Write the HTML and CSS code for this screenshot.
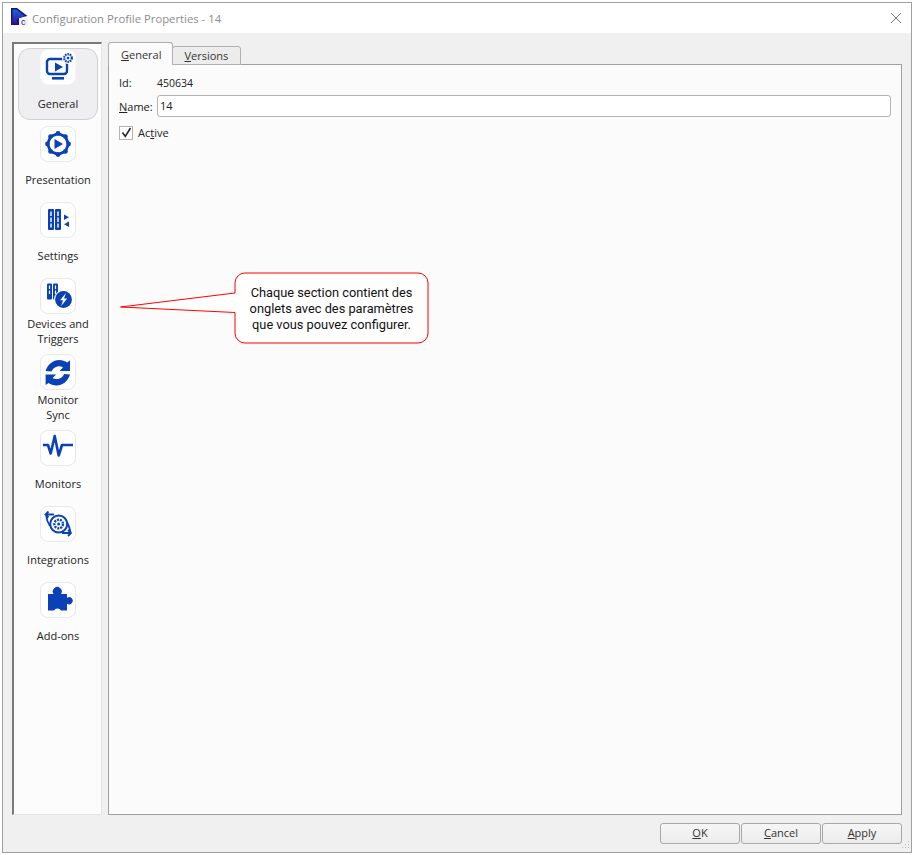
FILE: index.html
```html
<!DOCTYPE html>
<html lang="en">
<head>
    <meta charset="UTF-8">
    <title>Configuration Profile Properties - 14</title>
    <link rel="stylesheet" href="styles.css">
</head>
<body>
    <div class="window">
        <div class="titlebar">
            <svg class="app-icon" width="20" height="20" viewBox="0 0 20 20">
                <defs>
                    <linearGradient id="logo-fill" x1="0" y1="0" x2="0" y2="1">
                        <stop offset="0" stop-color="#1668e0"/>
                        <stop offset="1" stop-color="#3a0f9a"/>
                    </linearGradient>
                </defs>
                <path d="M0 0h6l10.500 8L8 10v7H0z" fill="#14147a"/>
                <path d="M1.500 1.500h4L13.500 8 6 11.500v4H1.500z" fill="url(#logo-fill)"/>
                <rect x="8" y="10" width="9" height="7.500" fill="#f2f0fa"/>
                <text x="10" y="16.500" class="app-c">c</text>
            </svg>
            <span class="title">Configuration Profile Properties - 14</span>
            <svg class="close" width="12" height="12" viewBox="0 0 12 12">
                <path d="M1 1l10 10M11 1L1 11" stroke="#777" stroke-width="1" fill="none"/>
            </svg>
        </div>
        <div class="client">
            <div class="main">
                <div class="sidebar">
                    <div class="nav-item selected">
                        <div class="nav-icon">
                            <svg width="30" height="30" viewBox="0 0 30 30">
                                <rect x="4" y="7" width="20" height="15" rx="3" fill="none" stroke="#0a41b5" stroke-width="2.400"/>
                                <path d="M12 10.500l8 4.500-8 4.500z" fill="#0a41b5"/>
                                <rect x="9" y="25" width="12" height="2.600" fill="#0a41b5"/>
                                <circle cx="25" cy="6" r="6" fill="#fff"/>
                                <circle cx="25" cy="6" r="3.800" fill="none" stroke="#0a41b5" stroke-width="2.200" stroke-dasharray="1.600 .8"/>
                                <circle cx="25" cy="6" r="1.300" fill="#0a41b5"/>
                            </svg>
                        </div>
                        <span>General</span>
                    </div>
                    <div class="nav-item">
                        <div class="nav-icon">
                            <svg width="30" height="30" viewBox="0 0 30 30">
                                <polygon points="15,4.500 22.400,7.600 25.500,15 22.400,22.400 15,25.500 7.600,22.400 4.500,15 7.600,7.600" fill="none" stroke="#0a41b5" stroke-width="2.800"/>
                                <g fill="#0a41b5">
                                    <circle cx="15" cy="4.500" r="2.400"/><circle cx="22.400" cy="7.600" r="2.400"/><circle cx="25.500" cy="15" r="2.400"/><circle cx="22.400" cy="22.400" r="2.400"/>
                                    <circle cx="15" cy="25.500" r="2.400"/><circle cx="7.600" cy="22.400" r="2.400"/><circle cx="4.500" cy="15" r="2.400"/><circle cx="7.600" cy="7.600" r="2.400"/>
                                    <path d="M11.500 10l8.500 5-8.500 5z"/>
                                </g>
                            </svg>
                        </div>
                        <span>Presentation</span>
                    </div>
                    <div class="nav-item">
                        <div class="nav-icon">
                            <svg width="30" height="30" viewBox="0 0 30 30">
                                <rect x="5" y="4" width="6" height="21" rx="1" fill="#0a41b5"/>
                                <rect x="12" y="4" width="6" height="21" rx="1" fill="#0a41b5"/>
                                <g fill="#fff">
                                    <rect x="7.300" y="6.500" width="1.400" height="4.500"/><rect x="7.300" y="12.500" width="1.400" height="4.500"/><rect x="7.300" y="18.500" width="1.400" height="4"/>
                                    <rect x="14.300" y="6.500" width="1.400" height="4.500"/><rect x="14.300" y="12.500" width="1.400" height="4.500"/><rect x="14.300" y="18.500" width="1.400" height="4"/>
                                </g>
                                <path d="M21 9.500l5 2.700-5 2.700zM26 16.500v5.400l-5-2.700z" fill="#0a41b5"/>
                            </svg>
                        </div>
                        <span>Settings</span>
                    </div>
                    <div class="nav-item tall">
                        <div class="nav-icon">
                            <svg width="30" height="30" viewBox="0 0 30 30">
                                <rect x="4" y="2.500" width="5" height="16" rx="1" fill="#0a41b5"/>
                                <rect x="10" y="2.500" width="5" height="16" rx="1" fill="#0a41b5"/>
                                <g fill="#fff">
                                    <rect x="5.900" y="4.500" width="1.200" height="3.500"/><rect x="5.900" y="9.500" width="1.200" height="3.500"/>
                                    <rect x="11.900" y="4.500" width="1.200" height="3.500"/><rect x="11.900" y="9.500" width="1.200" height="3.500"/>
                                </g>
                                <circle cx="20.500" cy="18.500" r="9.500" fill="#fff"/>
                                <circle cx="20.500" cy="18.500" r="8.400" fill="#0a41b5"/>
                                <path d="M23 12l-6 7.300h3l-1.800 5.700 6-7.500h-3.200z" fill="#fff"/>
                            </svg>
                        </div>
                        <span>Devices and<br>Triggers</span>
                    </div>
                    <div class="nav-item tall">
                        <div class="nav-icon">
                            <svg width="30" height="30" viewBox="0 0 30 30">
                                <path d="M2.500 14C5 7 10 3 16 3c3.500 0 6 1 8 2.500L27 3.500V14H16.500L20 10.500C18.500 9.500 16.500 9 14.500 9.500 11.500 10 9.500 12 8.500 14.500z" fill="#0a41b5"/>
                                <path d="M2.500 14C5 7 10 3 16 3c3.500 0 6 1 8 2.500L27 3.500V14H16.500L20 10.500C18.500 9.500 16.500 9 14.500 9.500 11.500 10 9.500 12 8.500 14.500z" fill="#0a41b5" transform="rotate(180 14.800 15.700)"/>
                            </svg>
                        </div>
                        <span>Monitor<br>Sync</span>
                    </div>
                    <div class="nav-item">
                        <div class="nav-icon">
                            <svg width="30" height="30" viewBox="0 0 30 30">
                                <path d="M0 12H5L7.700 20.500 11.700 3 15.700 22.500 19 12H30" fill="none" stroke="#0a41b5" stroke-width="2.600" stroke-linejoin="round"/>
                            </svg>
                        </div>
                        <span>Monitors</span>
                    </div>
                    <div class="nav-item">
                        <div class="nav-icon">
                            <svg width="30" height="30" viewBox="0 0 30 30">
                                <circle cx="15.700" cy="15" r="8.500" fill="none" stroke="#0a41b5" stroke-width="2"/>
                                <circle cx="15.700" cy="15" r="4.300" fill="none" stroke="#0a41b5" stroke-width="2.400" stroke-dasharray="2 1"/>
                                <circle cx="15.700" cy="15" r="1.500" fill="#0a41b5"/>
                                <path d="M5.500 2.500L2.500 5.500 5.500 8.500M2.500 5.500H11M3 6C3.500 10 5 14 7 17" fill="none" stroke="#0a41b5" stroke-width="1.800"/>
                                <path d="M25 21l3 3-3 3M28 24H19M27.500 23.500C27 20 25.500 16 24 13" fill="none" stroke="#0a41b5" stroke-width="1.800"/>
                            </svg>
                        </div>
                        <span>Integrations</span>
                    </div>
                    <div class="nav-item">
                        <div class="nav-icon">
                            <svg width="30" height="30" viewBox="0 0 30 30">
                                <path d="M5 9h5.500a4.500 4.500 0 1 1 7.500 0H24v4a3.500 3.500 0 1 1 0 5.500v7h-6a4 4 0 0 0-7 0H5z" fill="#0a41b5"/>
                            </svg>
                        </div>
                        <span>Add-ons</span>
                    </div>
                </div>
                <div class="content">
                    <div class="tabs">
                        <div class="tab active"><u>G</u>eneral</div>
                        <div class="tab"><u>V</u>ersions</div>
                    </div>
                    <div class="tab-panel">
                        <div class="row id-row">
                            <span class="field-label">Id:</span>
                            <span class="id-value">450634</span>
                        </div>
                        <div class="row">
                            <label class="field-label"><u>N</u>ame:</label>
                            <div class="text-input">14</div>
                        </div>
                        <div class="row check-row">
                            <span class="checkbox">
                                <svg width="11" height="11" viewBox="0 0 11 11"><path d="M1.500 5.500l2.800 4L9.500 1" fill="none" stroke="#222" stroke-width="1.500"/></svg>
                            </span>
                            <span>Ac<u>t</u>ive</span>
                        </div>
                    </div>
                </div>
            </div>
            <div class="buttons">
                <div class="btn"><u>O</u>K</div>
                <div class="btn"><u>C</u>ancel</div>
                <div class="btn"><u>A</u>pply</div>
            </div>
        </div>
        <svg class="grip" width="12" height="12" viewBox="0 0 12 12">
            <g fill="#bbb">
                <rect x="9" y="1" width="1" height="1"/>
                <rect x="6" y="4" width="1" height="1"/><rect x="9" y="4" width="1" height="1"/>
                <rect x="3" y="7" width="1" height="1"/><rect x="6" y="7" width="1" height="1"/><rect x="9" y="7" width="1" height="1"/>
            </g>
        </svg>
    </div>

    <div class="callout">
        <svg width="312" height="74" viewBox="0 0 312 74">
            <path d="M.5 35L115 21V11A10 10 0 0 1 125 1H298a10 10 0 0 1 10 10V61a10 10 0 0 1-10 10H125a10 10 0 0 1-10-10V40.500z" fill="#fff" stroke="#f00" stroke-width="1"/>
        </svg>
        <p class="callout-text">Chaque section contient des<br>onglets avec des paramètres<br>que vous pouvez configurer.</p>
    </div>
</body>
</html>
```

FILE: styles.css
```css
* {
    box-sizing: border-box;
}
html, body {
    margin: 0;
    height: 100%;
    background: #fff;
}
body {
    padding: 2px;
    font-family: "Open Sans", "Noto Sans", sans-serif;
    font-size: 11px;
    color: #222;
    position: relative;
}
.window {
    width: 910px;
    height: 851px;
    border: 1px solid #a0a0a0;
    display: flex;
    flex-direction: column;
    position: relative;
}
.titlebar {
    height: 30px;
    flex: none;
    display: flex;
    align-items: center;
    padding: 0 9px 0 8px;
    background: #fff;
}
.app-icon {
    flex: none;
    margin-right: 1px;
}
.app-c {
    font-family: "Liberation Sans", sans-serif;
    font-size: 9px;
    fill: #2a0f96;
}
.title {
    flex: 1;
    font-size: 11.3px;
    color: #8c8c8c;
}
.client {
    flex: 1;
    display: flex;
    flex-direction: column;
    background: #f0f0f0;
    padding: 9px 9px 0 9px;
    min-height: 0;
}
.main {
    flex: 1;
    display: flex;
    gap: 6px;
    min-height: 0;
}
.sidebar {
    width: 90px;
    flex: none;
    background: #fcfcfc;
    border-left: 2px solid #7a7a7a;
    border-top: 2px solid #7a7a7a;
    border-right: 1px solid #e4e4e4;
    border-bottom: 1px solid #e4e4e4;
    padding: 4px 3px 0 4px;
}
.nav-item {
    height: 76px;
    display: flex;
    flex-direction: column;
    align-items: center;
    text-align: center;
    line-height: 15px;
    color: #222;
    border-radius: 12px;
    border: 1px solid transparent;
}
.nav-item.selected {
    background: #efeff1;
    border-color: #d0d0d4;
    height: 72px;
    margin-bottom: 4px;
}
.nav-icon {
    width: 36px;
    height: 36px;
    flex: none;
    margin-top: 1px;
    margin-bottom: 10px;
    background: #fff;
    border: 1px solid #e8e8e8;
    border-radius: 8px;
    display: flex;
    align-items: center;
    justify-content: center;
}
.nav-item.selected .nav-icon {
    margin-top: 0;
    margin-bottom: 11px;
    border-color: #f6f6f6;
}
.nav-item.tall .nav-icon {
    margin-bottom: 2px;
}
.content {
    flex: 1;
    display: flex;
    flex-direction: column;
    min-width: 0;
}
.tabs {
    height: 23px;
    flex: none;
    display: flex;
    align-items: flex-end;
    margin-bottom: -1px;
    position: relative;
}
.tab {
    height: 19px;
    padding: 1px 12px 0 11px;
    background: #ececec;
    border: 1px solid #b0b0b0;
    border-radius: 3px 3px 0 0;
    margin-left: -1px;
    color: #333;
}
.tab.active {
    height: 23px;
    margin-left: 0;
    padding: 4px 11px 0 12px;
    background: #fbfbfb;
    border-bottom: none;
    z-index: 1;
}
.tab-panel {
    flex: 1;
    background: #fbfbfb;
    border: 1px solid #a0a0a0;
    padding: 9px 10px 0 10px;
}
.row {
    display: flex;
    align-items: center;
}
.field-label {
    width: 38px;
    flex: none;
}
.id-row {
    height: 16px;
    margin-bottom: 5px;
}
.id-value {
    font-size: 10.5px;
    padding-top: 1px;
}
.text-input {
    flex: 1;
    height: 22px;
    line-height: 20px;
    background: #fff;
    border: 1px solid #b4b4b4;
    border-radius: 3px;
    padding: 0 2px;
}
.check-row {
    margin-top: 8px;
    gap: 5px;
}
.checkbox {
    width: 14px;
    height: 14px;
    background: #fff;
    border: 1px solid #b4b4b4;
    display: flex;
    align-items: center;
    justify-content: center;
}
.buttons {
    height: 37px;
    flex: none;
    display: flex;
    justify-content: flex-end;
    align-items: flex-start;
    padding-top: 8px;
    gap: 1px;
}
.btn {
    width: 80px;
    height: 21px;
    line-height: 18px;
    text-align: center;
    background: linear-gradient(#f6f6f6, #ececec);
    border: 1px solid #a8a8a8;
    border-radius: 3px;
    color: #333;
}
.grip {
    position: absolute;
    right: 0;
    bottom: 0;
}
.callout {
    position: absolute;
    left: 120px;
    top: 272px;
    width: 312px;
    height: 74px;
}
.callout svg {
    display: block;
}
.callout-text {
    position: absolute;
    left: 115px;
    top: 13px;
    width: 193px;
    margin: 0;
    font-family: Roboto, sans-serif;
    font-size: 12.8px;
    line-height: 16px;
    text-align: center;
    color: #111;
}
```
